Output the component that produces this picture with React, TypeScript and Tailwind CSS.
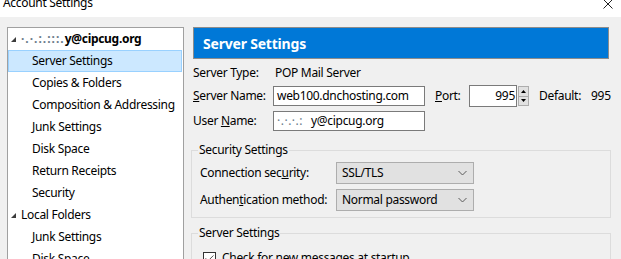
import { Check } from 'lucide-react'

const font = { fontFamily: '"Segoe UI", "Noto Sans", sans-serif' }

function Chevron() {
  return (
    <svg width="9" height="6" viewBox="0 0 9 6" className="shrink-0">
      <polyline points="0.5,1 4.5,5 8.5,1" fill="none" stroke="#5a5a5a" strokeWidth="1" />
    </svg>
  )
}

function Select({ value }: { value: string }) {
  return (
    <div className="w-[138px] h-[22px] bg-[#e1e1e1] border border-[#adadad] flex items-center justify-between pl-[5px] pr-[6px]">
      <span>{value}</span>
      <Chevron />
    </div>
  )
}

function Triangle() {
  return (
    <svg width="5" height="5" viewBox="0 0 5 5" className="shrink-0">
      <polygon points="5,0 5,5 0,5" fill="#3c3c3c" />
    </svg>
  )
}

const treeItems = [
  { label: 'Server Settings', selected: true },
  { label: 'Copies & Folders' },
  { label: 'Composition & Addressing' },
  { label: 'Junk Settings' },
  { label: 'Disk Space' },
  { label: 'Return Receipts' },
  { label: 'Security' },
]

export default function App() {
  return (
    <div className="w-[621px] h-[259px] overflow-hidden bg-[#f0f0f0] text-[12px] tracking-[-0.3px] text-black flex flex-col" style={font}>
      {/* Title bar */}
      <div className="h-[17px] bg-white flex justify-between shrink-0">
        <span className="ml-[3px] -mt-[5px] leading-[16px]">Account Settings</span>
        <svg width="10" height="10" viewBox="0 0 10 10" className="mr-[8px] -mt-[1px]">
          <path d="M0.5 0.5 L9.5 9.5 M9.5 0.5 L0.5 9.5" stroke="#222" strokeWidth="1" />
        </svg>
      </div>

      <div className="flex mt-[10px]">
        {/* Account tree */}
        <div className="ml-[7px] w-[177px] h-[260px] bg-white border border-[#a0a0a0] shrink-0">
          <div className="h-[22px] flex items-center pl-[3px] gap-[5px] font-bold">
            <Triangle />
            <span>
              <span className="text-[#6a7a8a] tracking-[1px]">·.·.:.:::.</span>y@cipcug.org
            </span>
          </div>
          {treeItems.map(item => (
            <div
              key={item.label}
              className={`h-[22px] flex items-center mr-[1px] ${item.selected ? 'bg-[#cce8ff] border border-[#99d1ff] pl-[23px]' : 'pl-[24px]'}`}
            >
              {item.label}
            </div>
          ))}
          <div className="h-[22px] flex items-center pl-[3px] gap-[5px]">
            <Triangle />
            <span>Local Folders</span>
          </div>
          <div className="h-[22px] flex items-center pl-[24px]">Junk Settings</div>
          <div className="h-[22px] flex items-center pl-[24px]">Disk Space</div>
        </div>

        {/* Settings pane */}
        <div className="ml-[7px] w-[420px] flex flex-col shrink-0">
          <div className="ml-[2px] w-[416px] h-[32px] bg-[#0078d7] border border-[#8c8c8c] flex items-center pl-[9px]">
            <span className="text-white font-bold text-[14px] tracking-[-0.2px]">Server Settings</span>
          </div>

          <div className="mt-[5px] h-[18px] flex items-center ml-[2px]">
            <span className="w-[82px]">Server Type:</span>
            <span>POP Mail Server</span>
          </div>

          <div className="mt-[3px] h-[22px] flex items-center ml-[2px]">
            <span className="w-[80px]"><u>S</u>erver Name:</span>
            <div className="w-[152px] h-[20px] bg-white border border-[#7a7a7a] flex items-center pl-[3px]">web100.dnchosting.com</div>
            <span className="ml-[10px] w-[34px]"><u>P</u>ort:</span>
            <div className="w-[48px] h-[22px] bg-white border border-[#7a7a7a] flex items-center justify-end pr-[1px]">995</div>
            <div className="ml-[1px] w-[11px] h-[20px] flex flex-col border border-[#adadad] bg-[#e1e1e1]">
              <div className="flex-1 flex items-center justify-center border-b border-[#adadad]">
                <svg width="5" height="3" viewBox="0 0 5 3"><polygon points="2.5,0 5,3 0,3" fill="#000" /></svg>
              </div>
              <div className="flex-1 flex items-center justify-center">
                <svg width="5" height="3" viewBox="0 0 5 3"><polygon points="0,0 5,0 2.5,3" fill="#000" /></svg>
              </div>
            </div>
            <span className="ml-[10px] w-[52px]">Default:</span>
            <span>995</span>
          </div>

          <div className="mt-[4px] h-[20px] flex items-center ml-[2px]">
            <span className="w-[80px]">User <u>N</u>ame:</span>
            <div className="w-[152px] h-[20px] bg-white border border-[#7a7a7a] flex items-center pl-[3px]">
              <span className="text-[#6a7a8a] tracking-[0.5px]">·.·.·.:</span>
              <span className="w-[8px]" />
              <span>y@cipcug.org</span>
            </div>
          </div>

          {/* Security Settings */}
          <fieldset className="mt-[11px] border border-[#dcdcdc] pb-[6px]">
            <legend className="ml-[6px] px-[1px] leading-[16px]">Security Settings</legend>
            <div className="pl-[8px] pt-[4px] flex flex-col gap-[5px]">
              <div className="flex items-center">
                <span className="w-[136px]">Connection sec<u>u</u>rity:</span>
                <Select value="SSL/TLS" />
              </div>
              <div className="flex items-center">
                <span className="w-[136px]">Authen<u>t</u>ication method:</span>
                <Select value="Normal password" />
              </div>
            </div>
          </fieldset>

          {/* Server Settings */}
          <fieldset className="mt-[7px] border border-[#dcdcdc] pb-[8px]">
            <legend className="ml-[6px] px-[1px] leading-[16px]">Server Settings</legend>
            <div className="pl-[11px] pt-[8px] flex items-center gap-[6px]">
              <div className="w-[13px] h-[13px] border border-[#333] bg-white flex items-center justify-center shrink-0">
                <Check className="w-[11px] h-[11px]" strokeWidth={1.5} />
              </div>
              <span>Check for new messages at startup</span>
            </div>
          </fieldset>
        </div>
      </div>
    </div>
  )
}
